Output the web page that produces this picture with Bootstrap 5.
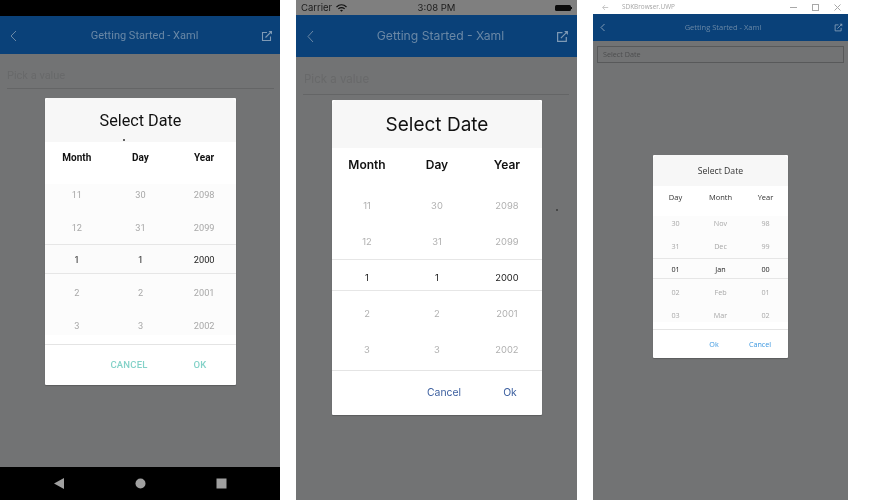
<!DOCTYPE html>
<html lang="en">
<head>
    <meta charset="UTF-8">
    <title>Select Date - Getting Started</title>
    <link href="https://cdn.jsdelivr.net/npm/bootstrap@5.3.3/dist/css/bootstrap.min.css" rel="stylesheet">
    <style>
        html, body { width: 873px; height: 500px; overflow: hidden; background: #fff; }
        .stage { width: 873px; height: 500px; gap: 16px; }
        .device { position: relative; height: 500px; background: #727374; font-family: var(--face); }
        /* the screenshots are scaled down, so everything is slightly soft */
        .dev-android { --face: Roboto, sans-serif; width: 280px; filter: blur(.35px); }
        .dev-ios { --face: Inter, sans-serif; width: 281px; filter: blur(.3px); }
        .dev-uwp { --face: "Open Sans", sans-serif; width: 255px; filter: blur(.45px); }

        /* system bars */
        .android-top { height: 16px; background: #000; }
        .android-nav { height: 33px; background: #000; }
        .ios-status { height: 15px; background: #7f7f7f; color: #1b1b1b; font-size: 9.5px; padding: 1px 5px 0; }
        .ios-status > * { flex: 1 1 0; }
        .uwp-title { height: 14px; background: #fff; color: #a5a5a5; font-size: 6.4px; }
        .uwp-name { margin-left: 13px; }
        .uwp-caption { width: 22px; }

        /* app bar + field */
        .app-bar { background: #0a4179; color: #6a88a6; }
        .app-bar svg { display: block; }
        .dev-android .app-bar { height: 38px; font-size: 11px; padding: 1px 7px 0 9px; }
        .dev-ios .app-bar { height: 42px; font-size: 12.2px; padding: 0 8px 0 10px; }
        .dev-uwp .app-bar { height: 27px; font-size: 7.5px; padding: 0 5px 0 6px; }
        .bar-title { flex: 1 1 0; text-align: center; }
        .dev-android .bar-title { padding: 2px 0 0 10px; }
        .dev-ios .bar-title { padding-left: 10px; }
        .dev-uwp .bar-title { padding-left: 6px; }

        .field-line { color: #68696a; border-bottom: 1px solid #646566; }
        .dev-android .field-line { margin: 14px 6px 0 7px; height: 21px; font-size: 11px; line-height: 15px; }
        .dev-ios .field-line { margin: 13px 8px 0 7px; height: 25px; font-size: 11.5px; line-height: 18px; padding-left: 1px; }
        .uwp-box { margin: 5px 4px 0; height: 17px; border: 1px solid #58595a; color: #4d4e4f; font-size: 7.2px; line-height: 15px; padding-left: 5px; }

        /* dialog */
        .date-dialog { position: absolute; border: 0; border-radius: 1px; background: #fff; box-shadow: 0 1px 1px rgba(0,0,0,.2); overflow: hidden; }
        .dev-android .date-dialog { left: 45px; top: 98px; width: 191px; height: 287px; --row: 33px; --sel: 30px; }
        .dev-ios .date-dialog { left: 36px; top: 100px; width: 210px; height: 315px; --row: 36px; --sel: 32px; }
        .dev-uwp .date-dialog { left: 60px; top: 155px; width: 135px; height: 203px; --row: 23px; --sel: 21px; }

        .dialog-title { background: #f7f7f7; border: 0; padding: 0; color: #111; text-align: center; }
        .dev-android .dialog-title { height: 44px; line-height: 46px; font-size: 16.2px; }
        .dev-ios .dialog-title { height: 48px; line-height: 49px; font-size: 19px; }
        .dev-uwp .dialog-title { height: 31px; line-height: 33px; font-size: 8.7px; color: #333; }

        .head-cell { text-align: center; color: #111; }
        .dev-android .head-cell { height: 35.5px; line-height: 32px; font-size: 10px; font-weight: 700; }
        .dev-ios .head-cell { height: 39px; line-height: 34px; font-size: 12px; font-weight: 600; }
        .dev-uwp .head-cell { height: 25.5px; line-height: 22px; font-size: 7.5px; color: #333; }

        .picker-row { height: var(--row); text-align: center; color: #a8a8a8; }
        .picker-row > div { line-height: var(--row); }
        .picker-now { height: var(--sel); margin-bottom: calc(var(--row) - var(--sel)); color: #222; border-top: 1px solid #e6e6e6; border-bottom: 1px solid #e6e6e6; }
        .picker-now > div { line-height: calc(var(--sel) - 1px); }
        .dev-android .picker-now ~ .picker-row > div { line-height: 31px; }
        .dev-ios .picker-row { color: #b0b0b0; }
        .dev-ios .picker-row > div { line-height: 37px; }
        .dev-ios .picker-now { color: #222; }
        .dev-ios .picker-now > div { line-height: 35px; }
        .dev-android .picker-rows { font-size: 9.2px; margin-bottom: 1.5px; background: linear-gradient(#fff 5.5px, #fcfcfc 5.5px, #fcfcfc 156.5px, #fff 156.5px); }
        .dev-ios .picker-rows { font-size: 9.4px; margin-bottom: 3px; }
        .dev-uwp .picker-rows { font-size: 7.2px; margin-bottom: 2.5px; background: linear-gradient(#fff 4px, #fcfcfc 4px, #fcfcfc 110px, #fff 110px); }
        .dev-android .picker-now { background: #fbfbfb; }
        .dev-uwp .picker-now { background: #fcfcfc; }

        .dialog-foot { background: #fff; border-top: 1px solid #e4e4e4; padding: 0; border-radius: 0; }
        .dev-android .dialog-foot { height: 41px; }
        .dev-ios .dialog-foot { height: 45px; }
        .dev-uwp .dialog-foot { height: 29px; }
        .foot-btn { border: 0; border-radius: 0; padding: 0; background: none; text-decoration: none; }
        .dev-android .foot-btn { color: #84d2c8; font-size: 9.5px; font-weight: 500; letter-spacing: .2px; }
        .dev-ios .foot-btn { color: #3c5f9f; font-size: 10.4px; }
        .dev-uwp .foot-btn { color: #3b97e0; font-size: 7.2px; }
        .dev-android .btn-a { width: 70px; } .dev-android .btn-b { width: 72px; }
        .dev-ios .btn-a { width: 68px; } .dev-ios .btn-b { width: 64px; }
        .dev-uwp .btn-a { width: 36px; } .dev-uwp .btn-b { width: 56px; }

        .speck { position: absolute; width: 2px; height: 2px; border-radius: 50%; background: #333; }
        .speck-a { left: 78px; top: 41px; }
        .speck-b { left: 260px; top: 209px; background: #3a3a3a; }
    </style>
</head>
<body>
    <div class="stage d-flex">

        <!-- android -->
        <div class="device dev-android d-flex flex-column">
            <div class="android-top"></div>
            <div class="app-bar d-flex align-items-center">
                <svg width="9" height="12" viewBox="0 0 9 12" fill="none" stroke="#6a88a6" stroke-width="1"><path d="M7 1 2 6l5 5"/></svg>
                <div class="bar-title">Getting Started - Xaml</div>
                <svg width="12" height="12" viewBox="0 0 12 12" fill="none" stroke="#7f9ab5" stroke-width="1.1"><path d="M6 2.5H1.5v8h8V6.5"/><path d="M4.500 7.500 10 2"/><path d="M7.500 1h3.500v3.500" fill="#7f9ab5" stroke="none"/></svg>
            </div>
            <div class="field-line">Pick a value</div>
            <div class="flex-grow-1"></div>
            <div class="android-nav d-flex align-items-center">
                <svg class="mx-auto" width="280" height="33" viewBox="0 0 280 33" fill="#a0a0a0"><path d="M64 11v11l-10-5.500z"/><circle cx="140.500" cy="16.500" r="5"/><rect x="216.500" y="11.500" width="10" height="10"/></svg>
            </div>

            <div class="card date-dialog">
                <div class="card-header dialog-title">Select Date</div>
                <span class="speck speck-a"></span>
                <div class="row g-0">
                    <div class="col-4 head-cell">Month</div>
                    <div class="col-4 head-cell">Day</div>
                    <div class="col-4 head-cell">Year</div>
                </div>
                <div class="picker-rows">
                    <div class="row g-0 picker-row"><div class="col-4">11</div><div class="col-4">30</div><div class="col-4">2098</div></div>
                    <div class="row g-0 picker-row"><div class="col-4">12</div><div class="col-4">31</div><div class="col-4">2099</div></div>
                    <div class="row g-0 picker-row picker-now"><div class="col-4">1</div><div class="col-4">1</div><div class="col-4">2000</div></div>
                    <div class="row g-0 picker-row"><div class="col-4">2</div><div class="col-4">2</div><div class="col-4">2001</div></div>
                    <div class="row g-0 picker-row"><div class="col-4">3</div><div class="col-4">3</div><div class="col-4">2002</div></div>
                </div>
                <div class="card-footer dialog-foot d-flex justify-content-end">
                    <button class="btn foot-btn btn-a">CANCEL</button>
                    <button class="btn foot-btn btn-b">OK</button>
                </div>
            </div>
        </div>

        <!-- ios -->
        <div class="device dev-ios d-flex flex-column">
            <div class="ios-status d-flex align-items-center">
                <div class="d-flex align-items-center gap-1">Carrier
                    <svg width="11" height="8" viewBox="0 0 11 8" fill="none" stroke="#111" stroke-width="1.2"><path d="M.5 3c3-2.800 7-2.800 10 0"/><path d="M2.300 4.900c1.900-1.500 4.500-1.500 6.400 0"/><path d="M5.500 7.800 4 6.300c1-.7 2-.7 3 0z" fill="#111" stroke="none"/></svg>
                </div>
                <div class="text-center">3:08 PM</div>
                <div class="d-flex justify-content-end">
                    <svg width="17" height="6" viewBox="0 0 17 6" fill="#0c0c0c"><rect width="16" height="6" rx="1.5"/><rect x="16" y="2" width="1" height="2"/></svg>
                </div>
            </div>
            <div class="app-bar d-flex align-items-center">
                <svg width="9" height="13" viewBox="0 0 9 13" fill="none" stroke="#6a88a6" stroke-width="1"><path d="M7 1 2 6.500 7 12"/></svg>
                <div class="bar-title">Getting Started - Xaml</div>
                <svg width="13" height="13" viewBox="0 0 12 12" fill="none" stroke="#7f9ab5" stroke-width="1.1"><path d="M6 2.500H1.500v8h8V6.500"/><path d="M4.500 7.500 10 2"/><path d="M7.500 1h3.500v3.500" fill="#7f9ab5" stroke="none"/></svg>
            </div>
            <div class="field-line">Pick a value</div>

            <div class="card date-dialog">
                <div class="card-header dialog-title">Select Date</div>
                <div class="row g-0">
                    <div class="col-4 head-cell">Month</div>
                    <div class="col-4 head-cell">Day</div>
                    <div class="col-4 head-cell">Year</div>
                </div>
                <div class="picker-rows">
                    <div class="row g-0 picker-row"><div class="col-4">11</div><div class="col-4">30</div><div class="col-4">2098</div></div>
                    <div class="row g-0 picker-row"><div class="col-4">12</div><div class="col-4">31</div><div class="col-4">2099</div></div>
                    <div class="row g-0 picker-row picker-now"><div class="col-4">1</div><div class="col-4">1</div><div class="col-4">2000</div></div>
                    <div class="row g-0 picker-row"><div class="col-4">2</div><div class="col-4">2</div><div class="col-4">2001</div></div>
                    <div class="row g-0 picker-row"><div class="col-4">3</div><div class="col-4">3</div><div class="col-4">2002</div></div>
                </div>
                <div class="card-footer dialog-foot d-flex justify-content-end">
                    <button class="btn foot-btn btn-a">Cancel</button>
                    <button class="btn foot-btn btn-b">Ok</button>
                </div>
            </div>
            <span class="speck speck-b"></span>
        </div>

        <!-- uwp -->
        <div class="device dev-uwp d-flex flex-column">
            <div class="uwp-title d-flex align-items-center">
                <svg class="ms-2" width="8" height="7" viewBox="0 0 10 8" fill="none" stroke="#c4c4c4" stroke-width="1.2"><path d="M9 4H2M5 1 2 4l3 3"/></svg>
                <span class="uwp-name">SDKBrowser.UWP</span>
                <div class="ms-auto d-flex">
                    <div class="uwp-caption d-flex justify-content-center"><svg width="7" height="7" viewBox="0 0 7 7" stroke="#a8a8a8" fill="none"><path d="M0 3.500h7"/></svg></div>
                    <div class="uwp-caption d-flex justify-content-center"><svg width="7" height="7" viewBox="0 0 7 7" stroke="#a8a8a8" fill="none"><rect x=".5" y=".5" width="6" height="6"/></svg></div>
                    <div class="uwp-caption d-flex justify-content-center"><svg width="7" height="7" viewBox="0 0 7 7" stroke="#a8a8a8" fill="none"><path d="m.5.500 6 6M6.500.500l-6 6"/></svg></div>
                </div>
            </div>
            <div class="app-bar d-flex align-items-center">
                <svg width="7" height="9" viewBox="0 0 7 9" fill="none" stroke="#7f9ab5" stroke-width="1"><path d="M5.500 1 2 4.500 5.500 8"/></svg>
                <div class="bar-title">Getting Started - Xaml</div>
                <svg width="9" height="9" viewBox="0 0 12 12" fill="none" stroke="#7f9ab5" stroke-width="1.2"><path d="M6 2.500H1.500v8h8V6.500"/><path d="M4.500 7.500 10 2"/><path d="M7.500 1h3.500v3.500" fill="#7f9ab5" stroke="none"/></svg>
            </div>
            <div class="uwp-box">Select Date</div>

            <div class="card date-dialog">
                <div class="card-header dialog-title">Select Date</div>
                <div class="row g-0">
                    <div class="col-4 head-cell">Day</div>
                    <div class="col-4 head-cell">Month</div>
                    <div class="col-4 head-cell">Year</div>
                </div>
                <div class="picker-rows">
                    <div class="row g-0 picker-row"><div class="col-4">30</div><div class="col-4">Nov</div><div class="col-4">98</div></div>
                    <div class="row g-0 picker-row"><div class="col-4">31</div><div class="col-4">Dec</div><div class="col-4">99</div></div>
                    <div class="row g-0 picker-row picker-now"><div class="col-4">01</div><div class="col-4">Jan</div><div class="col-4">00</div></div>
                    <div class="row g-0 picker-row"><div class="col-4">02</div><div class="col-4">Feb</div><div class="col-4">01</div></div>
                    <div class="row g-0 picker-row"><div class="col-4">03</div><div class="col-4">Mar</div><div class="col-4">02</div></div>
                </div>
                <div class="card-footer dialog-foot d-flex justify-content-end">
                    <button class="btn foot-btn btn-a">Ok</button>
                    <button class="btn foot-btn btn-b">Cancel</button>
                </div>
            </div>
        </div>

    </div>

    <script src="https://cdn.jsdelivr.net/npm/bootstrap@5.3.3/dist/js/bootstrap.bundle.min.js"></script>
</body>
</html>
